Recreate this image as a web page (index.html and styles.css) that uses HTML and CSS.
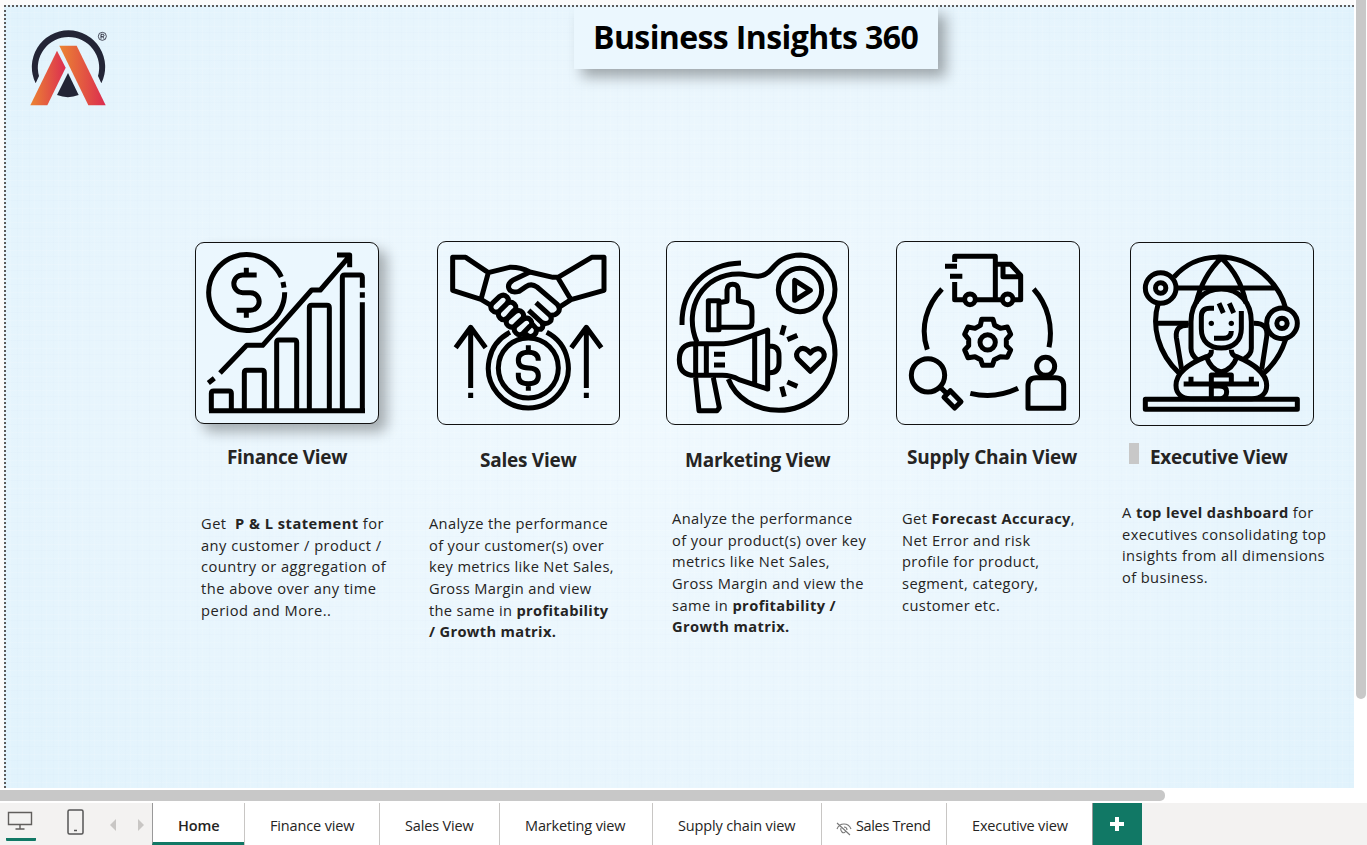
FILE: index.html
```html
<!DOCTYPE html>
<html lang="en">
<head>
<meta charset="utf-8">
<title>Business Insights 360</title>
<link rel="stylesheet" href="styles.css">
</head>
<body>
<div class="app">
  <div class="workspace">
    <main class="canvas">
      <header class="top">
        <svg class="logo" viewBox="84 80 246 246" role="img" aria-label="Logo">
          <defs>
            <linearGradient id="warm-l" x1="90" x2="197" y1="0" y2="0" gradientUnits="userSpaceOnUse"><stop stop-color="#eb8532"/><stop offset="1" stop-color="#dc2d51"/></linearGradient>
            <linearGradient id="warm-r" x1="178" x2="317" y1="0" y2="0" gradientUnits="userSpaceOnUse"><stop stop-color="#eb8532"/><stop offset="1" stop-color="#db2c50"/></linearGradient>
          </defs>
          <path d="M107 249A110 110 0 1 1 304 249L294 227A92 92 0 1 0 117 227Z" fill="#232536"/>
          <path d="M204 218L236 284Q204 297 171 284Z" fill="#232536"/>
          <path d="M91 315L171 151L197 202L142 315Z" fill="url(#warm-l)"/>
          <path d="M178 136H230L317 315H265Z" fill="url(#warm-r)"/>
          <circle cx="307" cy="108" r="12" fill="none" stroke="#232536" stroke-width="2.4"/>
          <path d="M303 115V102H308Q312 102 312 105.500T308 109H303M308 109L312 115" fill="none" stroke="#232536" stroke-width="2.800"/>
        </svg>
        <h1 class="heading"><span>Business Insights 360</span></h1>
      </header>
      <div class="views">
        <section class="view finance">
          <div class="card"><svg viewBox="33 40 546 540">
            <path d="M289 142A114 114 0 1 0 299 188"/>
            <path d="M294 157L297 174"/>
            <path d="M184 114V136M215 136H173A26 26 0 0 0 173 189H196A26 26 0 0 1 196 242H155M184 242V264"/>
            <path d="M105 430L185 347H233L380 181H406L493 80M456 76H494V113M70 460L88 446"/>
            <path d="M72 543H540M79 543V491Q79 484 86 484H132Q139 484 139 491V543M178 543V429Q178 422 185 422H231Q238 422 238 429V543M275 543V338Q275 331 282 331H328Q335 331 335 338V543M373 543V234Q373 227 380 227H426Q433 227 433 234V543M472 543V143Q472 136 479 136H525Q532 136 532 143V174M532 188V204M532 218V543"/>
          </svg></div>
          <h2><span>Finance View</span></h2>
          <p><span>Get &nbsp;<b>P &amp; L statement</b> for</span><span>any customer / product /</span><span>country or aggregation of</span><span>the above over any time</span><span>period and More..</span></p>
        </section>
        <section class="view sales">
          <div class="card"><svg viewBox="39 36 543 546">
            <path d="M190 128L122 82H83V181L168 208L190 128L254 112Q286 111 315 126L384 142H399L500 82H537V181L438 209L399 144M438 209L402 232M168 208L198 226"/>
            <path d="M315 126L263 151Q246 162 252 176T282 184L303 170Q319 159 336 171L397 223Q408 237 399 247T375 256L333 218M375 256Q383 268 374 276T350 277L311 241M350 277Q358 290 348 298H333"/>
            <path d="M202 220L224 199Q237 191 246 201T244 222L223 243Q211 251 202 241T202 220ZM223 244L246 221Q258 211 268 222T266 242L246 265Q234 274 225 264T223 244ZM247 266L271 245Q284 237 292 247T292 266L270 287Q259 296 249 287T247 266ZM271 288L296 267Q309 260 317 271T313 290L294 310Q283 319 273 309T271 288ZM318 278L333 295Q337 309 325 317T301 310"/>
            <path d="M255 307A120 120 0 1 0 365 307"/>
            <circle cx="310" cy="414" r="90"/>
            <path d="M310 346V366M340 392Q340 367 310 367T280 391Q280 414 310 414T340 437Q340 461 310 461T280 437V428M310 461V482"/>
            <path d="M137 474V292M92 353L137 292L182 353M137 488V504M484 474V292M439 353L484 292L529 353M484 488V504"/>
          </svg></div>
          <h2><span>Sales View</span></h2>
          <p><span>Analyze the performance</span><span>of your customer(s) over</span><span>key metrics like Net Sales,</span><span>Gross Margin and view</span><span>the same in <b>profitability</b></span><span><b>/ Growth matrix.</b></span></p>
        </section>
        <section class="view marketing">
          <div class="card"><svg viewBox="36 36 543 546">
            <path d="M81 285Q79 201 132 149Q181 101 258 99"/>
            <path d="M126 337C82 234 145 130 253 132C284 133 311 150 341 126C358 112 373 76 437 75C499 77 540 126 540 178C540 232 510 241 510 264C510 291 540 301 540 374C535 475 457 541 372 541C301 541 242 505 220 447"/>
            <circle cx="435" cy="180" r="65"/><path d="M419 151V211L466 181Z"/>
            <path d="M160 212H192V299H160ZM192 218L216 214V180Q217 163 233 163T250 180V213L279 219Q291 225 291 242V277Q291 292 276 292H192"/>
            <path d="M118 341H206Q231 340 267 326L338 300V477L252 449Q229 436 202 436H119Q73 436 73 389T118 341ZM122 341V436M154 341V436M299 317V465M177 373H210M177 405H210M345 348Q372 348 372 377V399Q372 428 345 428M122 443L132 542H186L193 533L175 443"/>
            <path d="M466 424L428 386Q420 371 432 360T459 362L466 369L473 362Q490 350 501 361T505 386ZM388 286L380 315M397 329L427 316M397 456L427 469M380 470L388 500"/>
          </svg></div>
          <h2><span>Marketing View</span></h2>
          <p><span>Analyze the performance</span><span>of your product(s) over key</span><span>metrics like Net Sales,</span><span>Gross Margin and view the</span><span>same in <b>profitability /</b></span><span><b>Growth matrix.</b></span></p>
        </section>
        <section class="view supply">
          <div class="card"><svg viewBox="36 36 546 546">
            <path d="M209 96V79H331V208M209 156V209H236M274 209H348M388 209H407V136L377 103H337M354 105V140H405M180 109H216M195 139H232"/>
            <circle cx="255" cy="208" r="16"/><circle cx="368" cy="208" r="16"/>
            <path d="M171 177C125 225 104 292 127 359M446 177C488 224 505 288 492 352M256 490Q330 508 399 475"/>
            <path d="M290 268H324L329 286L346 295L367 291L377 313L364 328V347L377 360L367 382L346 380L328 389L322 406H293L287 389L270 380L249 383L239 360L251 347V328L239 313L249 291L270 295L286 286Z"/>
            <circle cx="308" cy="337" r="23"/>
            <circle cx="129" cy="436" r="50"/><path d="M164 470L185 490M196 482L228 515L209 534L177 502Z"/>
            <circle cx="482" cy="409" r="27"/><path d="M429 535V468Q429 443 454 443H511Q536 443 536 468V535Z"/>
          </svg></div>
          <h2><span>Supply Chain View</span></h2>
          <p><span>Get <b>Forecast Accuracy</b>,</span><span>Net Error and risk</span><span>profile for product,</span><span>segment, category,</span><span>customer etc.</span></p>
        </section>
        <section class="view executive">
          <div class="card"><svg viewBox="48 39 546 546">
            <circle cx="137" cy="174" r="46"/><circle cx="137" cy="174" r="15.500"/><circle cx="501" cy="280" r="46"/><circle cx="501" cy="280" r="15.500"/>
            <path d="M177 141C246 63 363 63 446 132Q496 176 511 232M130 220C109 286 128 369 193 430M512 328Q493 389 446 430M188 174H483M122 280H221M319 84Q262 139 243 220M319 84Q377 138 393 220"/>
            <path d="M248 390Q228 375 228 355V275C228 216 265 177 319 177S409 218 409 275V355Q409 374 388 386M297 235H284Q259 235 259 260V296C259 334 283 354 319 354S379 332 379 296V243M312 220L325 249M343 220L356 249M297 325H326Q349 325 349 303"/>
            <path d="M221 286Q180 284 184 322L200 419M416 280Q461 279 455 321L440 419"/>
            <path d="M289 359Q291 377 274 380C224 400 183 428 183 466C183 490 199 506 227 506H411C439 506 455 490 455 466C455 429 411 399 365 380Q349 375 349 359M274 380Q288 420 319 426Q353 418 366 380M289 506V435H349V462M206 462H432M228 440V466M409 440V466M289 468H312Q335 468 335 485T318 506"/>
            <path d="M91 508H547V538H91Z"/><circle class="dot" cx="289" cy="280" r="8"/><circle class="dot" cx="349" cy="280" r="8"/>
          </svg></div>
          <h2><i class="marker"></i><span>Executive View</span></h2>
          <p><span>A <b>top level dashboard</b> for</span><span>executives consolidating top</span><span>insights from all dimensions</span><span>of business.</span></p>
        </section>
      </div>
    </main>
    <div class="vscroll"><div class="thumb"></div></div>
  </div>
  <div class="hscroll"><div class="thumb"></div></div>
  <nav class="tabs">
    <div class="tools">
      <div class="desktop"><svg width="26" height="20" viewBox="0 0 26 20"><path d="M1.500 1.500H24.500V13.500H1.500ZM13 14V17.500M8.500 18H17.500" fill="none" stroke="#605e5c" stroke-width="1.400"/></svg></div>
      <svg class="phone" width="17" height="26" viewBox="0 0 17 26"><rect x="1" y="1" width="15" height="24" rx="1.500" fill="none" stroke="#555" stroke-width="1.500"/><path d="M7 21.500H10" stroke="#555" stroke-width="1.500"/></svg>
      <svg class="prev" width="6" height="12" viewBox="0 0 6 12"><path d="M6 0V12L0 6Z" fill="#c8c6c4"/></svg>
      <svg class="next" width="6" height="12" viewBox="0 0 6 12"><path d="M0 0V12L6 6Z" fill="#c8c6c4"/></svg>
    </div>
    <div class="tab home"><span>Home</span></div>
    <div class="tab t-finance"><span>Finance view</span></div>
    <div class="tab t-sales"><span>Sales View</span></div>
    <div class="tab t-marketing"><span>Marketing view</span></div>
    <div class="tab t-supply"><span>Supply chain view</span></div>
    <div class="tab t-trend"><svg width="16" height="14" viewBox="0 0 16 14"><path d="M1 7Q3 2 8 2T15 7M1 1L14 13M5 6Q4 8 6 10T10 9M8 5Q11 5 11 8" fill="none" stroke="#777" stroke-width="1.100"/></svg><span>Sales Trend</span></div>
    <div class="tab t-executive"><span>Executive view</span></div>
    <div class="add"><svg width="14" height="14" viewBox="0 0 14 14"><path d="M7 0V14M0 7H14" stroke="#fff" stroke-width="4"/></svg></div>
  </nav>
</div>
</body>
</html>
```
FILE: styles.css
```css
* { box-sizing: border-box; }
body { margin: 0; background: #fff; font-family: "Open Sans", "Noto Sans", sans-serif; color: #252423; }
.app { width: 1367px; height: 845px; display: flex; flex-direction: column; overflow: hidden; background: #fff; }
.workspace { height: 788px; display: flex; padding: 5px 0 0 4px; background: #fbfbfb; }
.canvas {
  width: 1350px; height: 783px; overflow: hidden;
  background:
    repeating-linear-gradient(90deg, transparent 0 4px, rgba(255,255,255,.1) 4px 5px, transparent 5px 11px, rgba(150,195,215,.03) 11px 12px),
    repeating-linear-gradient(0deg, transparent 0 5px, rgba(255,255,255,.1) 5px 6px, transparent 6px 13px, rgba(150,195,215,.03) 13px 14px),
    radial-gradient(ellipse 70% 85% at 50% 50%, #f0f9fe 0%, #eaf6fd 50%, #dff2fc 100%);
  border-top: 2px dotted #5b5b5b; border-left: 2px dotted #5b5b5b;
}
.top { display: flex; align-items: flex-start; height: 234px; }
.logo { width: 82px; height: 82px; margin: 20px 0 0 22px; }
.heading { margin: 0 0 0 464px; width: 364px; height: 62px; padding-left: 19px; font-size: 32px; line-height: 59px; letter-spacing: -.6px; color: #000; background: #ebf7fe; box-shadow: 8px 8px 13px rgba(0,0,0,.32); white-space: nowrap; font-weight: 700; }
.views { display: grid; grid-template-columns: 233px 238px 230px 226px 232px; padding-left: 189px; align-items: start; }
.card { width: 184px; height: 184px; border: 1px solid #111; border-radius: 9px; }
.card svg { display: block; width: 100%; height: 100%; fill: none; stroke: #000; stroke-width: 15; stroke-linejoin: round; }
.card .dot { fill: #000; stroke: none; }
.finance .card { margin-top: 1px; height: 182px; background: #ebf7fe; box-shadow: 8px 8px 13px rgba(0,0,0,.3); }
.sales .card { margin-left: 9px; width: 183px; }
.marketing .card { width: 183px; }
.executive .card { margin: 1px 0 0 8px; }
h2 { display: flex; margin: 0; height: 26px; font-size: 19px; line-height: 26px; font-weight: 700; letter-spacing: -.25px; white-space: nowrap; }
.finance h2 { margin: 20px 0 0 32px; letter-spacing: -.35px; }
.sales h2 { margin: 22px 0 0 52px; }
.marketing h2 { margin: 22px 0 0 19px; }
.supply h2 { margin: 19px 0 0 11px; letter-spacing: -.2px; }
.executive h2 { margin: 18px 0 0 7px; letter-spacing: -.3px; }
.marker { width: 10px; height: 21px; margin: -1px 11px 0 0; background: #c8c8c8; }
p { margin: 0; font-size: 14.67px; line-height: 21.65px; letter-spacing: .4px; white-space: nowrap; }
p span { display: block; width: max-content; }
p b { font-weight: 700; }
.finance p { margin: 43px 0 0 6px; letter-spacing: .47px; }
.sales p { margin: 40px 0 0 1px; letter-spacing: .33px; }
.marketing p { margin: 35px 0 0 6px; }
.supply p { margin: 38px 0 0 6px; }
.executive p { margin: 32px 0 0 0; }
.vscroll { width: 13px; height: 788px; margin-top: -5px; padding-left: 2px; background: #fff; }
.vscroll .thumb { width: 10px; height: 699px; border-radius: 0 0 5px 5px; background: #c8c8c8; }
.hscroll { height: 15px; padding-top: 2px; background: #fff; }
.hscroll .thumb { width: 1165px; height: 11px; border-radius: 0 5px 5px 0; background: #c8c8c8; }
.tabs { height: 42px; display: flex; background: #f3f2f1; font-size: 14.5px; line-height: 46px; letter-spacing: -.15px; white-space: nowrap; }
.tools { width: 152px; display: flex; align-items: flex-start; }
.desktop { width: 30px; height: 38px; margin-left: 6px; padding: 8px 0 0 1px; line-height: 0; border-bottom: 3px solid #117865; border-radius: 1px; }
.phone { margin: 6px 0 0 31px; }
.prev { margin: 16px 0 0 26px; }
.next { margin: 16px 0 0 22px; }
.tab { height: 42px; border-left: 1px solid #c8c6c4; background: #fff; padding-left: 25px; }
.home { width: 92px; border-bottom: 3px solid #117865; font-weight: 600; border-left-color: #999; }
.t-finance { width: 135px; }
.t-sales { width: 120px; }
.t-marketing { width: 153px; }
.t-supply { width: 169px; }
.t-trend { width: 125px; display: flex; padding-left: 14px; letter-spacing: -.35px; }
.t-trend svg { margin: 19px 4px 0 0; }
.t-executive { width: 146px; }
.add { width: 50px; background: #117865; border-left: 1px solid #999; padding: 14px 0 0 17px; line-height: 0; }
```
